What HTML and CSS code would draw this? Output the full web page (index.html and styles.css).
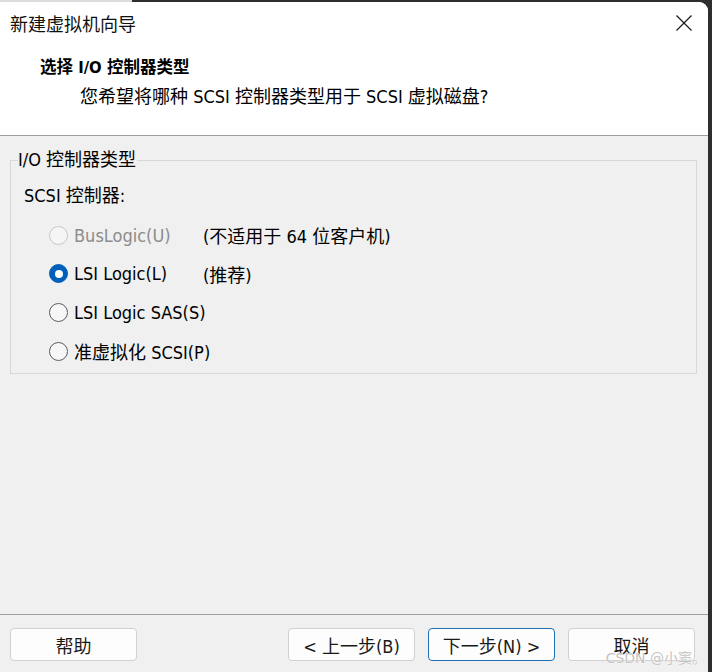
FILE: index.html
```html
<!DOCTYPE html>
<html lang="zh-CN">
<head>
<meta charset="utf-8">
<title>新建虚拟机向导</title>
<link rel="stylesheet" href="styles.css">
</head>
<body>
<div class="screen">
  <div class="topstrip"><div class="topstrip-light"></div></div>
  <div class="window">
    <div class="header">
      <div class="titlebar">
        <span class="title">新建虚拟机向导</span>
        <svg class="close" width="16" height="16" viewBox="0 0 16 16"><path d="M0.5 0.5 L15.5 15.5 M15.5 0.5 L0.5 15.5" stroke="#1a1a1a" stroke-width="1.2" fill="none"/></svg>
      </div>
      <div class="heading">选择 I/O 控制器类型</div>
      <div class="sub">您希望将哪种 SCSI 控制器类型用于 SCSI 虚拟磁盘?</div>
    </div>
    <div class="body">
      <fieldset class="group">
        <legend class="legend">I/O 控制器类型</legend>
        <div class="field-label">SCSI 控制器:</div>
        <div class="options">
          <div class="opt disabled"><span class="radio"></span><span class="opt-text">BusLogic(U)</span></div>
          <div class="note">(不适用于 64 位客户机)</div>
          <div class="opt"><span class="radio checked"></span><span class="opt-text">LSI Logic(L)</span></div>
          <div class="note">(推荐)</div>
          <div class="opt"><span class="radio"></span><span class="opt-text">LSI Logic SAS(S)</span></div>
          <div class="note"></div>
          <div class="opt"><span class="radio"></span><span class="opt-text">准虚拟化 SCSI(P)</span></div>
          <div class="note"></div>
        </div>
      </fieldset>
    </div>
    <div class="footer">
      <button class="btn btn-help">帮助</button>
      <div class="nav">
        <button class="btn">&lt; 上一步(B)</button>
        <button class="btn primary">下一步(N) &gt;</button>
        <button class="btn">取消</button>
      </div>
      <div class="watermark">CSDN @小窦。</div>
    </div>
  </div>
</div>
</body>
</html>
```

FILE: styles.css
```css
* { box-sizing: border-box; }
html, body { margin: 0; padding: 0; }
body {
  background: #2e2e2e;
  font-family: "DejaVu Sans Condensed", "DejaVu Sans", "Noto Sans CJK SC", sans-serif;
  font-size: 18px;
  color: #000;
}
.screen {
  width: 712px;
  height: 672px;
  display: flex;
  flex-direction: column;
  overflow: hidden;
}
.topstrip { height: 2px; flex: none; }
.topstrip-light { width: 132px; height: 2px; background: #dcdcdc; }
.window {
  flex: 1;
  margin-right: 4px;
  background: #f0f0f0;
  border-top-right-radius: 9px;
  display: flex;
  flex-direction: column;
  position: relative;
  overflow: hidden;
}
.header {
  background: #fff;
  border-bottom: 1px solid #a0a0a0;
  padding-bottom: 27px;
}
.titlebar {
  height: 42px;
  display: flex;
  align-items: center;
  justify-content: space-between;
  padding: 0 16px 0 10px;
}
.title {
  font-family: "Noto Sans CJK SC", sans-serif;
  font-size: 18px;
  color: #111;
  line-height: 22px;
}
.close { display: block; }
.heading {
  margin-top: 13px;
  padding-left: 40px;
  line-height: 22px;
  font-weight: bold;
  font-size: 16.5px;
  color: #000;
}
.sub {
  margin-top: 7px;
  padding-left: 80px;
  line-height: 22px;
  font-size: 18px;
  color: #000;
}
.body {
  flex: 1;
  padding: 14px 11px 0 10px;
}
.group {
  margin: 0;
  border: 1px solid #d8d8d8;
  padding: 0 0 2px 13px;
  min-width: 0;
}
.legend {
  padding: 0 1px 0 0;
  margin-left: -6px;
  line-height: 20px;
  font-size: 18px;
}
.field-label {
  margin-top: 15px;
  line-height: 22px;
  font-size: 18px;
}
.options {
  margin-top: 9px;
  display: grid;
  grid-template-columns: 179px auto;
  grid-auto-rows: 38.67px;
  align-items: center;
  white-space: nowrap;
}
.opt {
  display: flex;
  align-items: center;
  padding-left: 25px;
  gap: 6px;
}
.radio {
  width: 19px;
  height: 19px;
  border-radius: 50%;
  border: 1.5px solid #5c5c5c;
  background: #f7f7f7;
  flex: none;
  display: flex;
  align-items: center;
  justify-content: center;
}
.radio.checked {
  background: #005fb8;
  border-color: #005fb8;
}
.radio.checked::after {
  content: "";
  width: 8px;
  height: 8px;
  border-radius: 50%;
  background: #fff;
}
.opt.disabled .radio { border-color: #c8c8c8; background: #f5f5f5; }
.opt.disabled .opt-text { color: #8c8c8c; }
.footer {
  flex: none;
  border-top: 1px solid #a0a0a0;
  height: 58px;
  padding: 13px 13px 0 10px;
  display: flex;
  justify-content: space-between;
  position: relative;
}
.nav { display: flex; gap: 13px; }
.btn {
  width: 127px;
  height: 33px;
  background: #fdfdfd;
  border: 1px solid #d0d0d0;
  border-radius: 4px;
  font-family: "DejaVu Sans Condensed", "DejaVu Sans", "Noto Sans CJK SC", sans-serif;
  font-size: 18px;
  color: #1a1a1a;
  padding: 0;
}
.btn.primary { border-color: #1f6fb5; }
.watermark {
  position: absolute;
  right: 2px;
  bottom: 5px;
  font-family: "DejaVu Sans", "Noto Sans CJK SC", sans-serif;
  font-size: 14px;
  color: #c4c4c4;
  text-shadow: 0 0 1px #fff, 0 0 1px #fff;
}
```
